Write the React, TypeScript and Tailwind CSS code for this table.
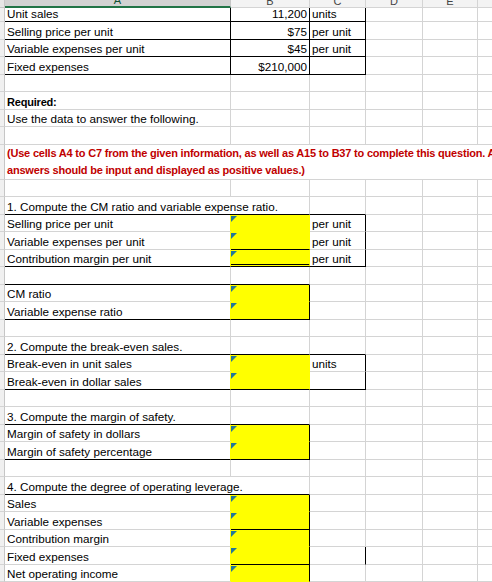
import React from "react";

type Bc = "g" | "k" | "y" | "d";
type Cell = {
  t?: string;
  al?: "r";
  bold?: boolean;
  y?: boolean;
  tri?: boolean;
  r?: Bc;
  b?: Bc;
  span?: "ab";
};

const RB: Record<string, string> = {
  g: "border-r-[#d4d4d4]",
  k: "border-r-black",
  y: "border-r-[#ffff00]",
};
const BB: Record<string, string> = {
  g: "border-b-[#d4d4d4]",
  k: "border-b-black",
  y: "border-b-[#ffff00]",
  d: "border-b-black border-b-[3px] border-double",
};

const COLW = ["w-[226px]", "w-[79px]", "w-[56px]", "w-[57px]", "w-[55px]", "w-[60px]"];

function Tri() {
  return (
    <svg className="absolute left-0 top-[1px]" width="6" height="6" viewBox="0 0 6 6">
      <polygon points="0,0 6,0 0,6" fill="#23789a" />
    </svg>
  );
}

function RowHdr() {
  return <div className="w-[5px] shrink-0 bg-[#f0f0f0] border-r border-b border-r-[#c6c6c6] border-b-[#d4d4d4]" />;
}

function Row({ h, cells }: { h: string; cells: Cell[] }) {
  const out: React.ReactNode[] = [];
  let col = 0;
  cells.forEach((c, i) => {
    const w = c.span === "ab" ? "w-[305px]" : COLW[col];
    col += c.span === "ab" ? 2 : 1;
    out.push(
      <div
        key={i}
        className={`relative flex items-end shrink-0 whitespace-nowrap px-[2px] border-r border-b ${w} ${RB[c.r || "g"]} ${BB[c.b || "g"]} ${c.y ? "bg-[#ffff00]" : ""} ${c.al === "r" ? "justify-end" : ""}`}
      >
        {c.tri && <Tri />}
        {c.t && <span className={`leading-[14px] ${c.bold ? "font-bold text-[11px] tracking-[-0.2px]" : ""}`}>{c.t}</span>}
      </div>
    );
  });
  while (col < 6) {
    out.push(
      <div key={"f" + col} className={`shrink-0 border-r border-b border-r-[#d4d4d4] border-b-[#d4d4d4] ${COLW[col]}`} />
    );
    col++;
  }
  return (
    <div className={`flex ${h}`}>
      <RowHdr />
      {out}
    </div>
  );
}

const H = "h-[17.5px]";

export default function App() {
  const top = (a: string, b: string, c: string): Cell[] => [
    { t: a, r: "k", b: "k" },
    { t: b, al: "r", r: "k", b: "k" },
    { t: c, r: "k", b: "k" },
  ];
  const yel = (r: Bc, b: Bc): Cell => ({ y: true, tri: true, r, b });

  return (
    <div className="w-[492px] h-[582px] overflow-hidden bg-white text-black font-['Liberation_Sans',Arial,sans-serif] text-[11.7px]">
      {/* column header */}
      <div className="flex h-[7.5px] overflow-hidden">
        <div className="w-[5px] shrink-0 bg-[#e6e6e6] border-r border-b border-[#c6c6c6]" />
        <div className="w-[226px] shrink-0 flex items-end justify-center bg-[#d2d2d2] border-b-2 border-b-[#217346] border-r border-r-[#c6c6c6] text-[11px] leading-[11px] text-[#0f5132]">
          A
        </div>
        {[
          ["w-[79px]", "B"],
          ["w-[56px]", "C"],
          ["w-[57px]", "D"],
          ["w-[55px]", "E"],
          ["w-[60px]", "F"],
        ].map(([w, l]) => (
          <div
            key={l}
            className={`${w} shrink-0 flex items-end justify-center bg-[#f3f3f3] border-b border-r border-[#d4d4d4] text-[11px] leading-[11px] text-[#444444]`}
          >
            {l}
          </div>
        ))}
      </div>

      <Row h="h-[14.5px]" cells={top("Unit sales", "11,200", "units")} />
      <Row h={H} cells={top("Selling price per unit", "$75", "per unit")} />
      <Row h={H} cells={top("Variable expenses per unit", "$45", "per unit")} />
      <Row h={H} cells={top("Fixed expenses", "$210,000", "")} />
      <Row h={H} cells={[]} />
      <Row h={H} cells={[{ t: "Required:", bold: true }]} />
      <Row h={H} cells={[{ t: "Use the data to answer the following." }]} />
      <Row h={H} cells={[]} />

      <div className="flex h-[35px]">
        <RowHdr />
        <div className="flex items-end w-[600px] shrink-0 px-[2px] border-b border-b-[#d4d4d4] whitespace-nowrap">
          <span className="leading-[17px] font-bold text-[11px] tracking-[-0.2px] text-[#c00000]">
            (Use cells A4 to C7 from the given information, as well as A15 to B37 to complete this question. All
            <br />
            answers should be input and displayed as positive values.)
          </span>
        </div>
      </div>

      <Row h={H} cells={[]} />
      <Row h={H} cells={[{ t: "1. Compute the CM ratio and variable expense ratio.", span: "ab", b: "k" }, { b: "k" }]} />
      <Row h={H} cells={[{ t: "Selling price per unit", r: "y" }, yel("y", "y"), { t: "per unit", r: "k" }]} />
      <Row h={H} cells={[{ t: "Variable expenses per unit", r: "y" }, yel("y", "k"), { t: "per unit", r: "k" }]} />
      <Row h={H} cells={[{ t: "Contribution margin per unit", r: "y", b: "k" }, yel("y", "d"), { t: "per unit", r: "k", b: "k" }]} />
      <Row h={H} cells={[{ b: "k" }, { b: "k" }]} />
      <Row h={H} cells={[{ t: "CM ratio", r: "y" }, yel("k", "y")]} />
      <Row h={H} cells={[{ t: "Variable expense ratio", r: "y", b: "k" }, yel("k", "k")]} />
      <Row h={H} cells={[]} />
      <Row h={H} cells={[{ t: "2. Compute the break-even sales.", b: "k" }, { b: "k" }, { b: "k" }]} />
      <Row h={H} cells={[{ t: "Break-even in unit sales", r: "y" }, yel("y", "y"), { t: "units", r: "k" }]} />
      <Row h={H} cells={[{ t: "Break-even in dollar sales", r: "y", b: "k" }, yel("y", "k"), { r: "k", b: "k" }]} />
      <Row h={H} cells={[]} />
      <Row h={H} cells={[{ t: "3. Compute the margin of safety.", b: "k" }, { b: "k" }]} />
      <Row h={H} cells={[{ t: "Margin of safety in dollars", r: "y" }, yel("k", "y")]} />
      <Row h={H} cells={[{ t: "Margin of safety percentage", r: "y", b: "k" }, yel("k", "k")]} />
      <Row h={H} cells={[]} />
      <Row h={H} cells={[{ t: "4. Compute the degree of operating leverage.", span: "ab", b: "k" }]} />
      <Row h={H} cells={[{ t: "Sales", r: "y" }, yel("k", "y")]} />
      <Row h={H} cells={[{ t: "Variable expenses", r: "y" }, yel("k", "k")]} />
      <Row h={H} cells={[{ t: "Contribution margin", r: "y" }, yel("k", "y")]} />
      <Row h={H} cells={[{ t: "Fixed expenses", r: "y" }, yel("k", "k"), { r: "k" }]} />
      <Row h={H} cells={[{ t: "Net operating income", r: "y" }, yel("k", "y")]} />
    </div>
  );
}
